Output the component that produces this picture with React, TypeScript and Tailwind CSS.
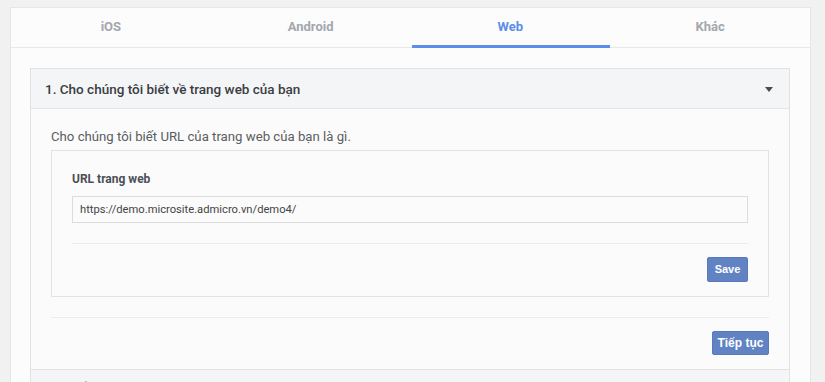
import React from "react";

const tabs = ["iOS", "Android", "Web", "Khác"];

export default function App() {
  return (
    <div
      className="w-[825px] h-[382px] overflow-hidden bg-[#f1f1f1] pl-[10px] pt-[7px]"
      style={{ fontFamily: "Roboto, 'Noto Sans', sans-serif" }}
    >
      <div className="w-[801px] h-[400px] border border-[#e6e6e6] bg-[#fcfcfc]">
        {/* Tabs */}
        <div className="flex h-[40px] border-b border-[#e8e8e8]">
          {tabs.map((t) => {
            const active = t === "Web";
            return (
              <div key={t} className="relative flex-1 flex items-center justify-center">
                <span
                  className={
                    "text-[13px] font-bold pb-[1px] " +
                    (active ? "text-[#5b8ee6]" : "text-[#a3a7ad]")
                  }
                >
                  {t}
                </span>
                {active && (
                  <div className="absolute left-[1px] right-0 bottom-[-1px] h-[3px] bg-[#5b8ee6]" />
                )}
              </div>
            );
          })}
        </div>

        {/* Content */}
        <div className="pl-[19px] pr-[20px] pt-[20px]">
          <div className="border border-[#e2e2e2]">
            {/* Accordion header */}
            <div className="h-[40px] bg-[#f4f5f7] border-b border-[#e6e6e6] flex items-center justify-between pl-[14px] pr-[16px]">
              <span className="text-[13.5px] font-medium text-[#3a3d42] pt-[1px]">
                1. Cho chúng tôi biết về trang web của bạn
              </span>
              <svg width="8" height="5" viewBox="0 0 8 5" className="mt-[2px]">
                <path d="M0 0 H8 L4 5 Z" fill="#4b4b4b" />
              </svg>
            </div>

            {/* Body */}
            <div className="bg-[#fbfbfb] px-[20px] pt-[20px] pb-[14px]">
              <p className="text-[13.2px] text-[#5a5d62] leading-[16px] mb-[5px]">
                Cho chúng tôi biết URL của trang web của bạn là gì.
              </p>
              <div className="border border-[#e3e3e3] bg-[#fbfbfb] px-[20px] pt-[20px] pb-[14px]">
                <div className="text-[12px] font-bold text-[#4b4f56] leading-[16px] mb-[9px]">
                  URL trang web
                </div>
                <div className="h-[27px] border border-[#dcdcdc] bg-[#fbfbfb] flex items-center pl-[7px]">
                  <span className="text-[11.2px] text-[#444] pt-[1px]">
                    https://demo.microsite.admicro.vn/demo4/
                  </span>
                </div>
                <div className="mt-[20px] border-t border-[#ececec]" />
                <div className="flex justify-end mt-[13px]">
                  <button
                    className="h-[25px] w-[41px] rounded-[2px] border border-[#5a79ba] bg-[#6283c3] text-white text-[11px] font-bold"
                    style={{ fontFamily: "'Liberation Sans', Arial, sans-serif" }}
                  >
                    Save
                  </button>
                </div>
              </div>
              <div className="mt-[20px] border-t border-[#ececec]" />
              <div className="flex justify-end mt-[13px]">
                <button
                  className="h-[24px] w-[57px] rounded-[2px] border border-[#5a79ba] bg-[#6283c3] text-white text-[12px] font-bold"
                  style={{ fontFamily: "'Liberation Sans', Arial, sans-serif" }}
                >
                  Tiếp tục
                </button>
              </div>
            </div>
          </div>
          <div className="border border-t-0 border-[#e2e2e2] h-[40px] bg-[#f4f5f7] pl-[14px] pt-[9px]">
            <span className="block text-[13.5px] leading-[16px] font-medium text-[#3a3d42]">
              2. Thiết lập sự kiện
            </span>
          </div>
        </div>
      </div>
    </div>
  );
}
